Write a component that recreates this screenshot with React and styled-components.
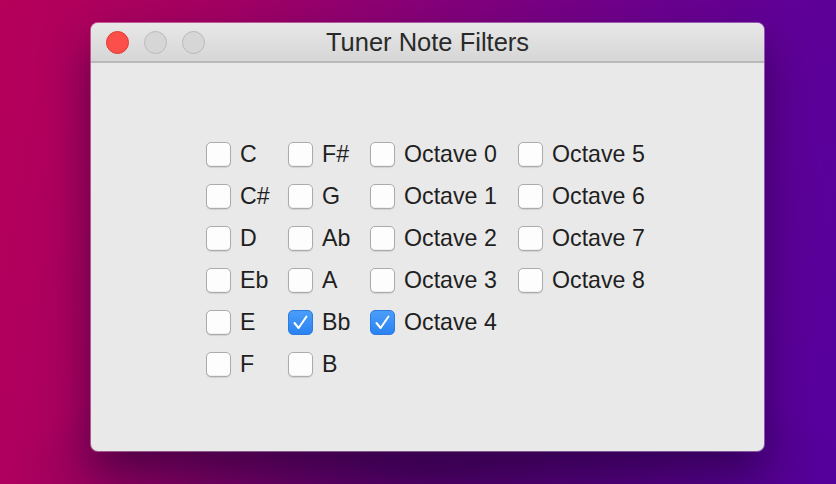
import React from "react";
import styled, { createGlobalStyle } from "styled-components";

const Global = createGlobalStyle`
  html, body { margin: 0; padding: 0; }
  body { font-family: "Liberation Sans", Arial, sans-serif; }
`;

const Desktop = styled.div`
  width: 836px;
  height: 484px;
  box-sizing: border-box;
  padding: 23px 0 0 91px;
  overflow: hidden;
  background:
    radial-gradient(ellipse 420px 120px at 430px 470px, rgba(40, 0, 80, 0.55), rgba(40, 0, 80, 0) 100%),
    linear-gradient(100deg, #b6005a 0%, #a30063 25%, #82007c 50%, #6a008f 72%, #55009e 100%);
`;

const Window = styled.div`
  width: 673px;
  height: 428px;
  border-radius: 7px;
  background: #e9e9e9;
  overflow: hidden;
  display: flex;
  flex-direction: column;
  box-shadow: 0 0 0 1px rgba(255, 255, 255, 0.35), 0 22px 45px rgba(25, 0, 50, 0.55);
`;

const TitleBar = styled.div`
  height: 38px;
  flex: none;
  display: flex;
  align-items: center;
  position: relative;
  padding-left: 15px;
  background: linear-gradient(#e8e8e8, #d6d6d6);
  border-bottom: 2px solid #b9b9b9;
`;

const Lights = styled.div`
  display: flex;
  gap: 15px;
`;

const Light = styled.span`
  width: 23px;
  height: 23px;
  border-radius: 50%;
  box-sizing: border-box;
  background: ${(p) => (p.$red ? "#fc4f49" : "#d6d6d6")};
  border: 1px solid ${(p) => (p.$red ? "#e03a34" : "#bababa")};
`;

const Title = styled.div`
  position: absolute;
  left: 0;
  right: 0;
  top: 0;
  bottom: 0;
  display: flex;
  align-items: center;
  justify-content: center;
  font-size: 25.5px;
  color: #2a2a2a;
  pointer-events: none;
`;

const Content = styled.div`
  flex: 1;
  display: flex;
  padding: 70px 0 0 115px;
`;

const Grid = styled.div`
  display: grid;
  grid-template-columns: 82px 82px 148px auto;
  grid-template-rows: repeat(6, 42px);
  grid-auto-flow: column;
  align-self: flex-start;
`;

const Item = styled.label`
  display: flex;
  align-items: center;
  gap: 9px;
  font-size: 23.2px;
  color: #1f1f1f;
  white-space: nowrap;
`;

const Box = styled.span`
  width: 25px;
  height: 25px;
  box-sizing: border-box;
  border-radius: 5px;
  flex: none;
  display: flex;
  align-items: center;
  justify-content: center;
  background: ${(p) => (p.$on ? "linear-gradient(#4a9ef9, #2a82f2)" : "#fdfdfd")};
  border: 1px solid ${(p) => (p.$on ? "#2b7be0" : "#ababab")};
  box-shadow: ${(p) => (p.$on ? "none" : "inset 0 -1px 0 rgba(0,0,0,0.05), 0 1px 1px rgba(0,0,0,0.1)")};
`;

const Spacer = styled.div``;

const Check = ({ on }) => (
  <Box $on={on}>
    {on && (
      <svg width="21" height="21" viewBox="0 0 21 21">
        <path d="M4.5 11 L8.6 16 L16.5 4.5" fill="none" stroke="#fff" strokeWidth="2" strokeLinecap="round" strokeLinejoin="round" />
      </svg>
    )}
  </Box>
);

const columns = [
  ["C", "C#", "D", "Eb", "E", "F"],
  ["F#", "G", "Ab", "A", "Bb", "B"],
  ["Octave 0", "Octave 1", "Octave 2", "Octave 3", "Octave 4"],
  ["Octave 5", "Octave 6", "Octave 7", "Octave 8"],
];
const checked = new Set(["Bb", "Octave 4"]);

export default function App() {
  return (
    <>
      <Global />
      <Desktop>
        <Window>
          <TitleBar>
            <Lights>
              <Light $red />
              <Light />
              <Light />
            </Lights>
            <Title>Tuner Note Filters</Title>
          </TitleBar>
          <Content>
            <Grid>
              {columns.map((col, ci) => {
                const cells = col.map((label) => (
                  <Item key={label}>
                    <Check on={checked.has(label)} />
                    {label}
                  </Item>
                ));
                while (cells.length < 6) cells.push(<Spacer key={`s${ci}-${cells.length}`} />);
                return cells;
              })}
            </Grid>
          </Content>
        </Window>
      </Desktop>
    </>
  );
}
